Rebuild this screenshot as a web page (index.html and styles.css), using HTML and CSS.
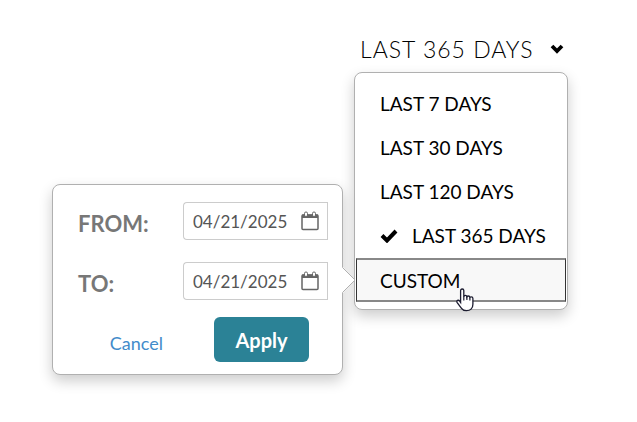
FILE: index.html
```html
<!DOCTYPE html>
<html lang="en">
<head>
<meta charset="utf-8">
<title>Date range</title>
<link rel="stylesheet" href="styles.css">
</head>
<body>
<main class="range">
  <form class="dialog">
    <div class="field">
      <label class="field-label" for="from">FROM:</label>
      <div class="date">
        <input class="date-input" id="from" type="text" value="04/21/2025">
        <button class="date-button" type="button" aria-label="Choose start date">
          <svg class="calendar" viewBox="0 0 18 20"><path d="M2 4h14q1 0 1 1v12.500q0 1-1 1H2q-1 0-1-1V5q0-1 1-1z" fill="none" stroke="currentColor" stroke-width="1.500"/><path d="M1 3.500h16v3.500H1z" fill="currentColor"/><rect x="3.500" y="1" width="3" height="4.500" rx="1.400" fill="#fff" stroke="currentColor"/><rect x="11.500" y="1" width="3" height="4.500" rx="1.400" fill="#fff" stroke="currentColor"/></svg>
        </button>
      </div>
    </div>
    <div class="field">
      <label class="field-label" for="to">TO:</label>
      <div class="date">
        <input class="date-input" id="to" type="text" value="04/21/2025">
        <button class="date-button" type="button" aria-label="Choose end date">
          <svg class="calendar" viewBox="0 0 18 20"><path d="M2 4h14q1 0 1 1v12.500q0 1-1 1H2q-1 0-1-1V5q0-1 1-1z" fill="none" stroke="currentColor" stroke-width="1.500"/><path d="M1 3.500h16v3.500H1z" fill="currentColor"/><rect x="3.500" y="1" width="3" height="4.500" rx="1.400" fill="#fff" stroke="currentColor"/><rect x="11.500" y="1" width="3" height="4.500" rx="1.400" fill="#fff" stroke="currentColor"/></svg>
        </button>
      </div>
    </div>
    <div class="actions">
      <button class="cancel" type="button">Cancel</button>
      <button class="apply" type="button">Apply</button>
    </div>
    <svg class="arrow" viewBox="0 0 14 26"><path d="M0 0h1L13 13 1 26H0z" fill="#fff"/><path d="M.5 0v.5L13 13 .5 25.5v.5" fill="none" stroke="#b0b0b0"/></svg>
  </form>
  <div class="picker">
    <button class="trigger" type="button">
      <span>LAST 365 DAYS</span>
      <svg class="chevron" viewBox="0 0 14 10"><path d="M2 2l5 5 5-5" fill="none" stroke="#000" stroke-width="3.800"/></svg>
    </button>
    <div class="menu">
      <button class="item" type="button">LAST 7 DAYS</button>
      <button class="item" type="button">LAST 30 DAYS</button>
      <button class="item" type="button">LAST 120 DAYS</button>
      <button class="item selected" type="button">
        <svg class="check" viewBox="0 0 18 14"><path d="M2 6.500l5 5L16 2" fill="none" stroke="#000" stroke-width="4"/></svg>
        <span>LAST 365 DAYS</span>
      </button>
      <button class="item custom" type="button">CUSTOM
        <svg class="cursor" viewBox="0 0 18 24"><path d="M4.600 14.500V2.600q0-1.600 1.600-1.600t1.600 1.600v6q.3-1.200 1.600-1.200t1.500 1.400q.4-.8 1.500-.8 1.300 0 1.500 1.300.4-.5 1.400-.5 1.600 0 1.600 1.800v5.600q0 3.400-1.800 4.900-1.700 1.600-4.600 1.600-3.400 0-5-2.400L1.200 14.600q-.8-1.600.3-2.200 1.200-.6 2.200.8z" fill="#fff" stroke="#1c1c30" stroke-width="1.300"/><path d="M7.800 8v4.500M10.900 8.500V12M13.900 9.500V12.500" stroke="#1c1c30" stroke-width="1.200"/></svg>
      </button>
    </div>
  </div>
</main>
</body>
</html>
```
FILE: styles.css
```css
* {
  box-sizing: border-box;
}

body {
  margin: 0;
  background: #fff;
  font-family: Lato, "Liberation Sans", sans-serif;
}

button,
input {
  margin: 0;
  font: inherit;
}

button {
  padding: 0;
  border: 0;
  background: none;
  text-align: left;
}

.range {
  display: flex;
  align-items: flex-start;
  gap: 11px;
  max-width: 720px;
  padding: 24px 69px 24px 52px;
}

.dialog,
.menu {
  border: 1px solid #b0b0b0;
  border-radius: 8px;
  background: #fff;
  box-shadow: 0 6px 14px rgba(0, 0, 0, 0.2);
}

.dialog {
  position: relative;
  flex: 1;
  display: flex;
  flex-direction: column;
  gap: 22px;
  margin-top: 160px;
  padding: 17px 14px 12px 25px;
}

.field {
  display: flex;
  align-items: center;
  justify-content: space-between;
}

.field-label {
  padding-top: 4px;
  color: #777;
  font-size: 22px;
  font-weight: 700;
}

.date {
  display: flex;
  width: 145px;
  height: 38px;
}

.date-input {
  flex: 1;
  min-width: 0;
  padding: 0 0 0 9px;
  border: 1px solid #ccc;
  border-right: 0;
  border-radius: 4px 0 0 4px;
  background: #fff;
  color: #555;
  font-size: 17px;
}

.date-button {
  display: flex;
  align-items: center;
  justify-content: center;
  width: 36px;
  border: 1px solid #ccc;
  border-left: 0;
  color: #666;
}

.calendar {
  width: 18px;
  height: 20px;
}

.actions {
  display: flex;
  align-items: center;
  justify-content: flex-end;
  gap: 51px;
  margin-top: -5px;
  padding-right: 19px;
}

.cancel {
  padding-top: 6px;
  color: #428bca;
  font-size: 18px;
}

.apply {
  width: 95px;
  height: 45px;
  border-radius: 6px;
  background: #2b8296;
  color: #fff;
  font-size: 20px;
  font-weight: 700;
  text-align: center;
}

.arrow {
  position: absolute;
  top: 82px;
  right: -14px;
  width: 14px;
  height: 26px;
}

.picker {
  width: 214px;
}

.trigger {
  display: flex;
  align-items: center;
  justify-content: space-between;
  width: 100%;
  height: 48px;
  padding: 2px 4px 0 6px;
  color: #000;
  font-size: 23px;
  font-weight: 300;
  letter-spacing: 1px;
}

.chevron {
  width: 14px;
  height: 10px;
}

.menu {
  display: flex;
  flex-direction: column;
  padding: 8px 1px 7px;
}

.item {
  display: flex;
  align-items: center;
  height: 44px;
  padding: 0 24px;
  color: #000;
  font-size: 19px;
  white-space: nowrap;
}

.selected {
  gap: 14px;
  height: 45px;
}

.check {
  flex: none;
  width: 18px;
  height: 14px;
}

.custom {
  position: relative;
  padding: 0 23px;
  border: 1px solid #333;
  border-width: 2px 1px;
  border-color: #888 #333;
  background: #f8f8f8;
}

.cursor {
  position: absolute;
  top: 28px;
  left: 99px;
  width: 18px;
  height: 24px;
}
```
